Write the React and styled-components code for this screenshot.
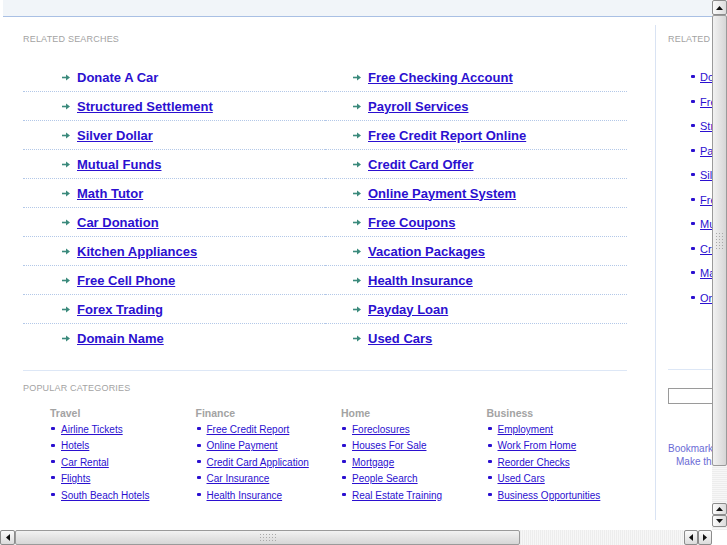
import React from "react";
import styled, { createGlobalStyle, css } from "styled-components";

const colors = {
  link: "#2b10d0",
  label: "#a3a3a3",
  rule: "#dde7f6",
  dots: "#b3c8e8",
  arrow: "#3b8a7c",
};

const GlobalStyle = createGlobalStyle`
  html, body {
    margin: 0;
    padding: 0;
    background: #fff;
    overflow: hidden;
  }
  body {
    font-family: "Liberation Sans", Arial, sans-serif;
  }
`;

const Frame = styled.div`
  display: grid;
  grid-template-columns: 712px 15px;
  grid-template-rows: 530px 15px;
  width: 727px;
  height: 545px;
`;

const Viewport = styled.div`
  overflow: hidden;
  background: #fff;
`;

const Page = styled.div`
  width: 940px;
`;

const TopBar = styled.div`
  height: 16px;
  background: #f1f5f9;
  border-bottom: 1px solid #a9c0e4;
  margin-left: 3px;
`;

const Main = styled.div`
  display: flex;
  margin-top: 8px;
`;

const LeftPanel = styled.div`
  width: 604px;
  padding: 9px 28px 0 23px;
  height: 486px;
  border-right: 1px solid #d9e3f3;
`;

const RightPanel = styled.div`
  width: 260px;
  padding: 9px 0 0 12px;
`;

const Label = styled.div`
  font-size: 9px;
  line-height: 11px;
  color: ${colors.label};
  text-transform: uppercase;
  letter-spacing: 0.2px;
  margin-bottom: ${(p) => p.$gap || 0}px;
  white-space: nowrap;
`;

const SearchGrid = styled.div`
  display: grid;
  grid-template-columns: 302px 302px;
`;

const SearchCell = styled.div`
  display: flex;
  align-items: center;
  gap: 7px;
  height: 28px;
  padding-left: ${(p) => p.$indent}px;
  border-bottom: 1px dotted ${colors.dots};
  ${(p) =>
    p.$last &&
    css`
      border-bottom-color: transparent;
    `}
`;

const BigLink = styled.a`
  font-size: 13px;
  font-weight: bold;
  color: ${colors.link};
  text-decoration: ${(p) => (p.$plain ? "none" : "underline")};
  white-space: nowrap;
  cursor: pointer;
`;

const Rule = styled.div`
  height: 1px;
  background: ${colors.rule};
  margin-top: ${(p) => p.$top}px;
  margin-bottom: ${(p) => p.$bottom}px;
`;

const CategoryGrid = styled.div`
  display: grid;
  grid-template-columns: repeat(4, 145.5px);
  padding-left: 27px;
`;

const CategoryTitle = styled.div`
  font-size: 10.5px;
  font-weight: bold;
  color: ${colors.label};
  line-height: 13px;
`;

const BulletList = styled.ul`
  list-style: none;
  margin: 0;
  padding: 0 0 0 ${(p) => p.$indent}px;
`;

const BulletItem = styled.li`
  position: relative;
  line-height: ${(p) => p.$line}px;
  height: ${(p) => p.$line}px;
  white-space: nowrap;
  &::before {
    content: "";
    position: absolute;
    left: ${(p) => -p.$indent + 1}px;
    top: 50%;
    width: 4px;
    height: 3px;
    margin-top: -1px;
    border-radius: 1px;
    background: ${colors.link};
  }
`;

const SmallLink = styled.a`
  font-size: ${(p) => p.$size || 10}px;
  color: ${colors.link};
  text-decoration: underline;
  cursor: pointer;
`;

const SearchBox = styled.input`
  display: block;
  margin-top: 18px;
  width: 220px;
  height: 16px;
  box-sizing: border-box;
  border: 1px solid #9a9a9a;
  padding: 0;
`;

const Bookmark = styled.div`
  font-size: 10px;
  line-height: 13px;
  color: #6b6bd6;
  white-space: nowrap;
  padding-left: ${(p) => p.$indent || 0}px;
  margin-top: ${(p) => p.$top || 0}px;
`;

/* scrollbars */
const VBar = styled.div`
  display: flex;
  flex-direction: column;
  background: repeating-linear-gradient(0deg, #ededed 0 1px, #f7f7f7 1px 2px);
`;

const HBar = styled.div`
  display: flex;
  background: repeating-linear-gradient(90deg, #ededed 0 1px, #f7f7f7 1px 2px);
`;

const Corner = styled.div`
  background: #fff;
`;

const ScrollButton = styled.div`
  flex: 0 0 ${(p) => p.$size}px;
  box-sizing: border-box;
  border: 1px solid #8c8c8c;
  border-radius: 2px;
  background: linear-gradient(${(p) => (p.$horizontal ? "180deg" : "90deg")}, #fbfbfb, #dcdcdc);
  display: flex;
  align-items: center;
  justify-content: center;
`;

const Thumb = styled.div`
  flex: 0 0 ${(p) => p.$size}px;
  box-sizing: border-box;
  border: 1px solid #9a9a9a;
  border-radius: 2px;
  background: linear-gradient(${(p) => (p.$horizontal ? "180deg" : "90deg")}, #f2f2f2, #d6d6d6);
  display: flex;
  align-items: center;
  justify-content: center;
`;

const Track = styled.div`
  flex: ${(p) => (p.$size ? `0 0 ${p.$size}px` : 1)};
`;

const Grip = styled.div`
  width: ${(p) => (p.$horizontal ? 17 : 9)}px;
  height: ${(p) => (p.$horizontal ? 9 : 17)}px;
  background-image: radial-gradient(circle, #a9a9a9 0.7px, transparent 0.9px);
  background-size: 3px 3px;
`;

const Arrow = ({ dir }) => {
  const pts = {
    up: "0,4 3.5,0 7,4",
    down: "0,0 3.5,4 7,0",
    left: "4,0 0,3.5 4,7",
    right: "0,0 4,3.5 0,7",
  }[dir];
  const vert = dir === "up" || dir === "down";
  return (
    <svg width={vert ? 7 : 4} height={vert ? 4 : 7} viewBox={vert ? "0 0 7 4" : "0 0 4 7"}>
      <polygon points={pts} fill="#111" />
    </svg>
  );
};

const GoArrow = () => (
  <svg width="8" height="7" viewBox="0 0 8 7">
    <path d="M0 3.5 H5" stroke={colors.arrow} strokeWidth="1.6" />
    <polygon points="4,0.5 8,3.5 4,6.5" fill={colors.arrow} />
  </svg>
);

const leftSearches = [
  "Donate A Car",
  "Structured Settlement",
  "Silver Dollar",
  "Mutual Funds",
  "Math Tutor",
  "Car Donation",
  "Kitchen Appliances",
  "Free Cell Phone",
  "Forex Trading",
  "Domain Name",
];

const rightSearches = [
  "Free Checking Account",
  "Payroll Services",
  "Free Credit Report Online",
  "Credit Card Offer",
  "Online Payment System",
  "Free Coupons",
  "Vacation Packages",
  "Health Insurance",
  "Payday Loan",
  "Used Cars",
];

const categories = [
  { title: "Travel", links: ["Airline Tickets", "Hotels", "Car Rental", "Flights", "South Beach Hotels"] },
  { title: "Finance", links: ["Free Credit Report", "Online Payment", "Credit Card Application", "Car Insurance", "Health Insurance"] },
  { title: "Home", links: ["Foreclosures", "Houses For Sale", "Mortgage", "People Search", "Real Estate Training"] },
  { title: "Business", links: ["Employment", "Work From Home", "Reorder Checks", "Used Cars", "Business Opportunities"] },
];

const sideLinks = [
  "Donate A Car",
  "Free Checking Account",
  "Structured Settlement",
  "Payroll Services",
  "Silver Dollar",
  "Free Credit Report Online",
  "Mutual Funds",
  "Credit Card Offer",
  "Math Tutor",
  "Online Payment System",
];

export default function App() {
  return (
    <>
      <GlobalStyle />
      <Frame>
        <Viewport>
          <Page>
            <TopBar />
            <Main>
              <LeftPanel>
                <Label $gap={18}>Related Searches</Label>
                <SearchGrid>
                  {leftSearches.map((item, i) => (
                    <React.Fragment key={item}>
                      <SearchCell $indent={39} $last={i === leftSearches.length - 1}>
                        <GoArrow />
                        <BigLink $plain={i === 0}>{item}</BigLink>
                      </SearchCell>
                      <SearchCell $indent={28} $last={i === rightSearches.length - 1}>
                        <GoArrow />
                        <BigLink>{rightSearches[i]}</BigLink>
                      </SearchCell>
                    </React.Fragment>
                  ))}
                </SearchGrid>
                <Rule $top={17} $bottom={12} />
                <Label $gap={13}>Popular Categories</Label>
                <CategoryGrid>
                  {categories.map((cat) => (
                    <div key={cat.title}>
                      <CategoryTitle>{cat.title}</CategoryTitle>
                      <BulletList $indent={11}>
                        {cat.links.map((l) => (
                          <BulletItem key={l} $line={16.4} $indent={11}>
                            <SmallLink>{l} </SmallLink>
                          </BulletItem>
                        ))}
                      </BulletList>
                    </div>
                  ))}
                </CategoryGrid>
              </LeftPanel>
              <RightPanel>
                <Label $gap={19}>Related Searches</Label>
                <BulletList $indent={32}>
                  {sideLinks.map((l) => (
                    <BulletItem key={l} $line={24.5} $indent={10}>
                      <SmallLink $size={11}>{l}</SmallLink>
                    </BulletItem>
                  ))}
                </BulletList>
                <Rule $top={60} $bottom={0} />
                <SearchBox type="text" />
                <Bookmark $top={38}>Bookmark this page</Bookmark>
                <Bookmark $indent={8}>Make this your Homepage</Bookmark>
              </RightPanel>
            </Main>
          </Page>
        </Viewport>
        <VBar>
          <ScrollButton $size={15}>
            <Arrow dir="up" />
          </ScrollButton>
          <Thumb $size={451}>
            <Grip />
          </Thumb>
          <Track />
          <ScrollButton $size={12}>
            <Arrow dir="up" />
          </ScrollButton>
          <ScrollButton $size={12}>
            <Arrow dir="down" />
          </ScrollButton>
          <Track $size={3} />
        </VBar>
        <HBar>
          <ScrollButton $size={15} $horizontal>
            <Arrow dir="left" />
          </ScrollButton>
          <Thumb $size={505} $horizontal>
            <Grip $horizontal />
          </Thumb>
          <Track />
          <ScrollButton $size={14} $horizontal>
            <Arrow dir="left" />
          </ScrollButton>
          <ScrollButton $size={14} $horizontal>
            <Arrow dir="right" />
          </ScrollButton>
        </HBar>
        <Corner />
      </Frame>
    </>
  );
}
